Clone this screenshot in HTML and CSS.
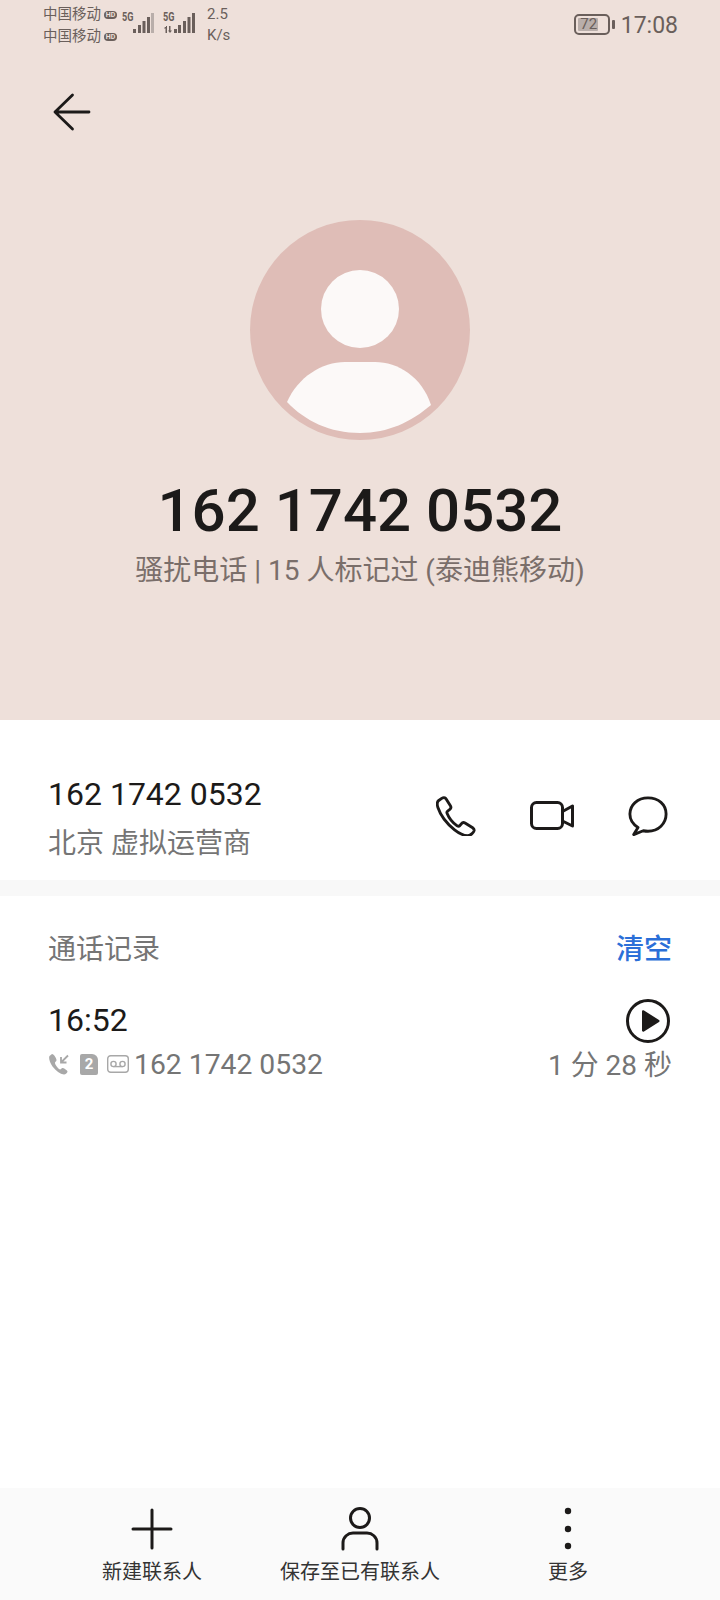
FILE: index.html
```html
<!DOCTYPE html>
<html lang="zh-CN">
<head>
    <meta charset="UTF-8">
    <meta name="viewport" content="width=device-width, initial-scale=1.0">
    <title>通话详情</title>
    <link rel="stylesheet" href="styles.css">
</head>
<body>
<div class="screen">
    <section class="hero">
        <!-- Статус-бар -->
        <div class="status-bar">
            <div class="carriers">
                <div class="carrier">中国移动<span class="hd">HD</span></div>
                <div class="carrier">中国移动<span class="hd">HD</span></div>
            </div>
            <div class="signal">
                <span class="net">5G</span>
                <svg width="21" height="22" viewBox="0 0 21 22">
                    <g fill="#6a5f5b">
                        <rect x="0" y="17" width="3" height="4"/>
                        <rect x="5" y="13" width="3" height="8"/>
                        <rect x="9.500" y="9" width="3" height="12"/>
                        <rect x="14" y="5" width="3" height="16"/>
                    </g>
                    <rect x="18" y="1" width="3" height="20" fill="#b9aeaa"/>
                </svg>
            </div>
            <div class="signal signal-second">
                <span class="net">5G</span>
                <svg width="32" height="22" viewBox="0 0 32 22">
                    <g fill="#6a5f5b">
                        <path d="M2 15h1v-1h1v7h-1.500v-4.500h-1.500zM6 14h1.500v4.500h1.500l-2 2.500-2-2.500h1z"/>
                        <rect x="11" y="17" width="3" height="4"/>
                        <rect x="15" y="13" width="3" height="8"/>
                        <rect x="20" y="9" width="3" height="12"/>
                        <rect x="24.500" y="5" width="3" height="16"/>
                        <rect x="29" y="1" width="3" height="20"/>
                    </g>
                </svg>
            </div>
            <div class="speed">2.5<br>K/s</div>
            <div class="battery">
                <div class="battery-body"><div class="battery-fill"></div><span>72</span></div>
                <div class="battery-tip"></div>
            </div>
            <div class="clock">17:08</div>
        </div>

        <a href="#" class="back">
            <svg width="38" height="38" viewBox="0 0 38 38" fill="none" stroke="#1c1a19" stroke-width="2.800" stroke-linecap="round" stroke-linejoin="round">
                <path d="M19.500 2 2 19l17.500 17M2 19h34"/>
            </svg>
        </a>

        <div class="avatar">
            <svg width="220" height="220" viewBox="0 0 220 220">
                <circle cx="110" cy="110" r="110" fill="#dfbdb7"/>
                <circle cx="110" cy="89" r="39" fill="#fcf9f8"/>
                <path d="M37 182C48 157 72 142 95 142h30c23 0 47 15 56 43-20 17-43 28-71 28-30 0-55-12-73-31z" fill="#fcf9f8"/>
            </svg>
        </div>
        <h1 class="title">162 1742 0532</h1>
        <p class="subtitle">骚扰电话 | 15 人标记过 (泰迪熊移动)</p>
    </section>

    <section class="contact">
        <div class="contact-text">
            <div class="contact-number">162 1742 0532</div>
            <div class="contact-place">北京 虚拟运营商</div>
        </div>
        <div class="contact-actions">
            <svg width="40" height="40" viewBox="0 0 42 42" fill="none" stroke="#1c1a19" stroke-width="3" stroke-linejoin="round">
                <path d="M6 2.500 2.500 5C1 6.500 1 9 2 12c3 9 9.500 17 17.500 23.500 5 4 11 6.500 15 6 2-.5 5-3 5.500-5 .3-1.500-.5-2.500-1.500-3.200l-8-5c-1.500-.8-2.800-.5-3.800.8l-1.700 2c-.8.8-1.800.8-2.800.2-4-2.800-8.500-8-10.500-13-.5-1-.2-2 .8-2.700l2-1.500c1.200-1 1.500-2.200.8-3.500l-5-8C9.500 1.800 7.500 1.500 6 2.500z"/>
            </svg>
            <svg width="44" height="30" viewBox="0 0 44 30" fill="none" stroke="#1c1a19" stroke-width="3" stroke-linejoin="round">
                <rect x="1.500" y="1.500" width="31" height="26" rx="5"/>
                <path d="M32.500 10.500 42.500 5v20l-10-5z"/>
            </svg>
            <svg width="40" height="40" viewBox="0 0 42 42" fill="none" stroke="#1c1a19" stroke-width="3" stroke-linejoin="round">
                <path d="M21 2C10 2 2 9.500 2 19c0 6 3.500 11 8.500 14L6 40.500l10-4c1.500.3 3.200.5 5 .5 11 0 19-8 19-18S32 2 21 2z"/>
            </svg>
        </div>
    </section>

    <div class="divider"></div>

    <section class="records">
        <div class="records-head">
            <span class="records-title">通话记录</span>
            <a href="#" class="clear">清空</a>
        </div>
        <div class="record">
            <div class="record-left">
                <div class="record-time">16:52</div>
                <div class="record-info">
                    <svg class="ico-call" width="21" height="21" viewBox="0 0 21 21">
                        <path d="M3 0 .5 2C-.5 4 .5 8 3.500 12.500 7 17 11 20 15 20.500c1.500 0 3.500-1.500 3.500-3 0-1-3.500-3.500-5-3.500-1 0-1.500 1.500-2.500 1.500C9 15 5.500 10 6 8.500c.2-.8 1.500-1 1.500-2.500C7.500 4.500 5 0 3 0z" fill="#a8a8a8"/>
                        <path d="M19 1.500 12.500 8M12 3v5.500h5.500" fill="none" stroke="#a8a8a8" stroke-width="1.800"/>
                    </svg>
                    <span class="sim">2</span>
                    <svg class="ico-voicemail" width="22" height="18" viewBox="0 0 22 18" fill="none" stroke="#a8a8a8" stroke-width="1.400">
                        <rect x=".7" y=".7" width="20.600" height="16.600" rx="3"/>
                        <circle cx="6.500" cy="9" r="2.600"/>
                        <circle cx="15.500" cy="9" r="2.600"/>
                        <path d="M6.500 11.600h9"/>
                    </svg>
                    <span class="record-number">162 1742 0532</span>
                </div>
            </div>
            <div class="record-right">
                <svg width="44" height="44" viewBox="0 0 44 44">
                    <circle cx="22" cy="22" r="20.500" fill="none" stroke="#1c1a19" stroke-width="3"/>
                    <path d="M16 12.500c0-1 1-1.500 2-1l15 9.500c.8.500.8 1.500 0 2l-15 9.500c-1 .5-2 0-2-1z" fill="#1c1a19"/>
                </svg>
                <div class="record-duration">1 分 28 秒</div>
            </div>
        </div>
    </section>

    <!-- Нижняя панель -->
    <nav class="toolbar">
        <a href="#" class="tool">
            <svg width="42" height="42" viewBox="0 0 42 42" stroke="#1c1a19" stroke-width="3" stroke-linecap="round">
                <path d="M21 2v38M2 21h38"/>
            </svg>
            <span>新建联系人</span>
        </a>
        <a href="#" class="tool">
            <svg width="38" height="44" viewBox="0 0 38 44" fill="none" stroke="#1c1a19" stroke-width="3" stroke-linecap="round">
                <circle cx="19" cy="11" r="9.500"/>
                <path d="M2 42v-6c0-6 5-10 10-10h14c5 0 10 4 10 10v6"/>
            </svg>
            <span>保存至已有联系人</span>
        </a>
        <a href="#" class="tool">
            <svg width="8" height="44" viewBox="0 0 8 44" fill="#1c1a19">
                <circle cx="4" cy="4" r="3.200"/>
                <circle cx="4" cy="22" r="3.200"/>
                <circle cx="4" cy="39" r="3.200"/>
            </svg>
            <span>更多</span>
        </a>
    </nav>
</div>
</body>
</html>
```

FILE: styles.css
```css
:root {
    --hero-bg: #eee0da;
    --text-color: #1c1a19;
    --muted-color: #757575;
    --status-color: #6a5f5b;
    --blue-color: #2b6fd8;
}

* {
    margin: 0;
    padding: 0;
    box-sizing: border-box;
    font-family: Roboto, 'Noto Sans CJK SC', sans-serif;
}

body {
    background: #fff;
    color: var(--text-color);
}

a {
    color: inherit;
    text-decoration: none;
}

svg {
    display: block;
    flex: none;
}

.screen {
    width: 720px;
    height: 1600px;
    display: flex;
    flex-direction: column;
}

/* Шапка */
.hero {
    height: 720px;
    background: var(--hero-bg);
    display: flex;
    flex-direction: column;
    align-items: center;
}

.status-bar {
    align-self: stretch;
    height: 50px;
    padding: 4px 42px 0 43px;
    display: flex;
    align-items: flex-start;
    color: var(--status-color);
}

.carrier {
    display: flex;
    align-items: center;
    height: 22px;
    font-size: 14.500px;
    line-height: 22px;
}

.hd {
    width: 13px;
    height: 8px;
    margin-left: 3px;
    border-radius: 4px;
    background: var(--status-color);
    color: var(--hero-bg);
    font-size: 7px;
    font-weight: 700;
    line-height: 8px;
    text-align: center;
}

.signal {
    display: flex;
    align-items: flex-end;
    height: 30px;
    margin-left: 5px;
}

.signal .net {
    font-size: 13px;
    font-weight: 700;
    line-height: 12px;
    width: 11px;
    margin-bottom: 11px;
    transform: scaleX(0.7);
    transform-origin: left;
}

/* У второй симки значок стоит над стрелками трафика */
.signal-second {
    margin-left: 9px;
}

.signal-second .net {
    width: 0;
}

.speed {
    margin-left: 12px;
    font-size: 15px;
    line-height: 21px;
}

.battery {
    margin-left: auto;
    margin-top: 10px;
    display: flex;
    align-items: center;
}

.battery-body {
    position: relative;
    width: 36px;
    height: 21px;
    border: 2px solid var(--status-color);
    border-radius: 5px;
    padding: 2px;
}

.battery-fill {
    width: 72%;
    height: 100%;
    background: #b9aeaa;
    border-radius: 1px;
}

/* Цифры заряда поверх заливки */
.battery-body span {
    position: absolute;
    left: 0;
    right: 6px;
    top: -1px;
    font-size: 15px;
    line-height: 19px;
    text-align: center;
}

.battery-tip {
    width: 3px;
    height: 9px;
    margin-left: 2px;
    background: var(--status-color);
    border-radius: 1px;
}

.clock {
    margin-left: 6px;
    margin-top: 8px;
    font-size: 23px;
    line-height: 28px;
}

.back {
    align-self: flex-start;
    margin: 43px 0 0 53px;
}

.avatar {
    margin-top: 89px;
}

.title {
    margin-top: 35px;
    font-size: 60px;
    font-weight: 500;
    line-height: 72px;
}

.subtitle {
    margin-top: 4px;
    font-size: 28px;
    line-height: 40px;
    color: #7a6e6a;
}

/* Контакт */
.contact {
    height: 160px;
    padding: 50px 48px 0;
    display: flex;
    justify-content: space-between;
}

.contact-number {
    font-size: 32px;
    line-height: 46px;
    margin-top: 1px;
}

.contact-place {
    margin-top: 7px;
    font-size: 28px;
    line-height: 40px;
    color: var(--muted-color);
}

.contact-actions {
    display: flex;
    align-items: center;
    gap: 54px;
    height: 40px;
    margin: 26px 4px 0 0;
}

.divider {
    height: 16px;
    background: #f8f8f8;
}

/* Журнал звонков */
.records {
    flex: 1;
    padding: 31px 48px 0;
}

.records-head {
    display: flex;
    justify-content: space-between;
    align-items: center;
    height: 40px;
}

.records-title {
    font-size: 28px;
    color: var(--muted-color);
}

.clear {
    font-size: 28px;
    font-weight: 500;
    color: var(--blue-color);
}

.record {
    margin-top: 32px;
    display: flex;
    justify-content: space-between;
}

.record-time {
    font-size: 32px;
    line-height: 44px;
    margin-top: -1px;
}

.record-info {
    margin-top: 2px;
    display: flex;
    align-items: center;
    height: 40px;
}

.ico-call {
    margin-left: 1px;
}

.sim {
    width: 18px;
    height: 21px;
    margin-left: 10px;
    border-radius: 2px 6px 2px 2px;
    background: #a8a8a8;
    color: #fff;
    font-size: 15px;
    font-weight: 700;
    line-height: 21px;
    text-align: center;
}

.ico-voicemail {
    margin-left: 9px;
}

.record-number {
    margin-left: 5px;
    font-size: 28.300px;
    color: var(--muted-color);
}

.record-right {
    display: flex;
    flex-direction: column;
    align-items: flex-end;
}

.record-right svg {
    margin-right: 2px;
}

.record-duration {
    margin-top: 3px;
    font-size: 28px;
    line-height: 40px;
    color: var(--muted-color);
}

/* Нижняя панель */
.toolbar {
    height: 112px;
    background: #fafafa;
    display: flex;
    justify-content: center;
}

.tool {
    width: 208px;
    padding-top: 19px;
    display: flex;
    flex-direction: column;
    align-items: center;
    font-size: 20px;
    line-height: 28px;
    color: #333;
    white-space: nowrap;
}

.tool svg {
    height: 44px;
    margin-bottom: 7px;
}
```
